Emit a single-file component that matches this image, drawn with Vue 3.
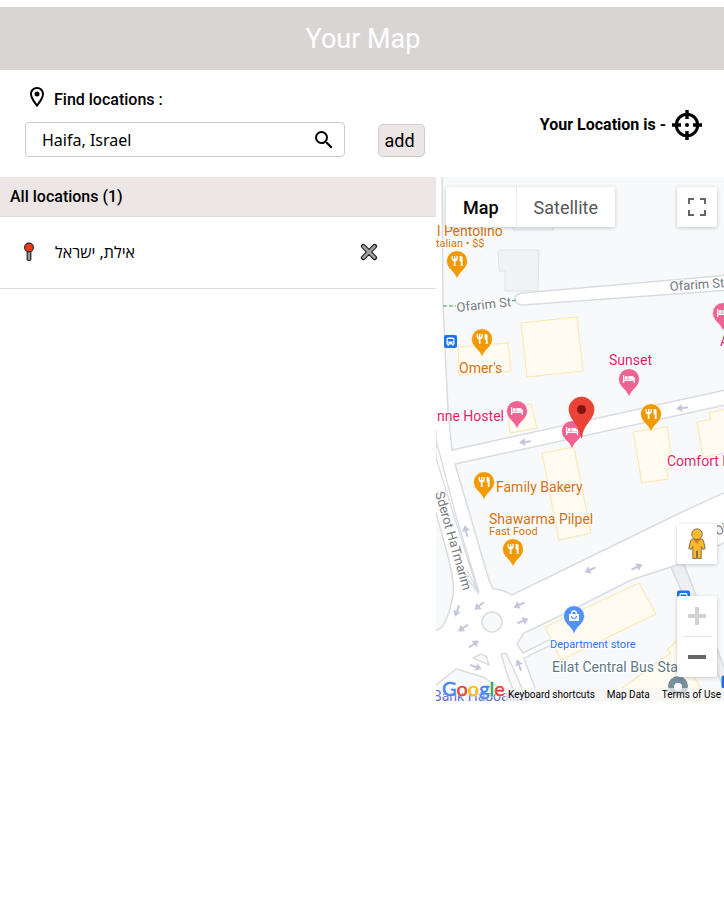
<script setup>
import { ref } from 'vue'

const query = ref('Haifa, Israel')
const locations = ref([{ id: 1, name: 'אילת, ישראל' }])

function add() {
  if (query.value) locations.value.push({ id: Date.now(), name: query.value })
}
function remove(id) {
  locations.value = locations.value.filter((l) => l.id !== id)
}

const pins = [
  { kind: 'food', x: 457, y: 261 },
  { kind: 'food', x: 482, y: 339 },
  { kind: 'food', x: 651, y: 414 },
  { kind: 'food', x: 484, y: 482 },
  { kind: 'food', x: 513, y: 549 },
  { kind: 'hotel', x: 517, y: 411 },
  { kind: 'hotel', x: 629, y: 379 },
  { kind: 'hotel', x: 572, y: 431 },
  { kind: 'hotel', x: 723, y: 313 },
  { kind: 'shop', x: 574, y: 616 },
]

const arrows = [
  { x: 525, y: 442, a: 172 },
  { x: 682, y: 408, a: 172 },
  { x: 466, y: 531, a: -103 },
  { x: 457, y: 611, a: 110 },
  { x: 479, y: 606, a: 140 },
  { x: 519, y: 605, a: 155 },
  { x: 463, y: 628, a: 145 },
  { x: 523, y: 621, a: -22 },
  { x: 474, y: 644, a: -35 },
  { x: 476, y: 667, a: 20 },
  { x: 519, y: 665, a: -110 },
  { x: 590, y: 570, a: 155 },
  { x: 637, y: 567, a: -25 },
]

const buildings = [
  '521,323 577,317 583,371 527,377',
  '458,347 508,343 511,371 459,375',
  '507,408 531,404 537,428 510,433',
  '542,453 574,447 591,533 559,540',
  '633,432 667,427 673,467 667,469 668,479 642,483',
  '697,422 711,419 709,413 726,409 726,453 703,457',
  '545,627 639,583 656,614 561,660',
  '690,628 667,650 671,653 622,688 630,701 708,701 694,677',
]

const labels = [
  { t: 'l Pentolino', x: 437, y: 236, c: 'food' },
  { t: 'talian • $$', x: 436, y: 247, c: 'food small' },
  { t: "Omer's", x: 459, y: 373, c: 'food' },
  { t: 'Family Bakery', x: 496, y: 492, c: 'food' },
  { t: 'Shawarma Pilpel', x: 489, y: 524, c: 'food' },
  { t: 'Fast Food', x: 489, y: 535, c: 'food small' },
  { t: 'nne Hostel', x: 437, y: 421, c: 'hotel' },
  { t: 'Sunset', x: 609, y: 365, c: 'hotel' },
  { t: 'Comfort Eilat', x: 667, y: 466, c: 'hotel' },
  { t: 'A', x: 720, y: 346, c: 'hotel' },
  { t: 'Department store', x: 550, y: 648, c: 'shop small' },
  { t: 'Eilat Central Bus Station', x: 552, y: 672, c: 'transit' },
  { t: 'Bank Hapoalim', x: 433, y: 701, c: 'bank' },
]
</script>

<template>
  <div class="page">
    <header class="title-bar"><h1>Your Map</h1></header>

    <section class="tools">
      <form class="finder" @submit.prevent="add">
        <label class="find-label" for="place">
          <svg width="24" height="24" viewBox="0 0 24 24"><path d="M12 2C8 2 5 5.100 5 9c0 5.200 7 13 7 13s7-7.800 7-13c0-3.900-3-7-7-7zM7 9c0-2.900 2.200-5 5-5s5 2.100 5 5c0 2.900-2.900 7.200-5 9.900C9.900 16.200 7 11.800 7 9z" /><circle cx="12" cy="9" r="2.500" /></svg>
          Find locations :
        </label>
        <div class="find-row">
          <div class="search">
            <input id="place" v-model="query" type="text" autocomplete="off" />
            <button class="search-btn" type="button" aria-label="Search">
              <svg width="24" height="24" viewBox="0 0 24 24"><path d="M15.500 14h-.79l-.28-.27A6.470 6.470 0 0 0 16 9.500 6.500 6.500 0 1 0 9.500 16c1.610 0 3.090-.59 4.230-1.570l.27.28v.79l5 4.990L20.490 19l-4.990-5zm-6 0C7.010 14 5 11.990 5 9.500S7.010 5 9.500 5 14 7.010 14 9.500 11.990 14 9.500 14z" /></svg>
            </button>
          </div>
          <button class="add" type="submit">add</button>
        </div>
      </form>
      <div class="mine">
        <span>Your Location is -</span>
        <button class="locate" type="button" aria-label="Find my location">
          <svg width="30" height="30" viewBox="0 0 30 30">
            <circle cx="15" cy="15" r="10.700" fill="none" stroke="#000" stroke-width="3" />
            <path d="M15 0v9M15 21v9M0 15h9M21 15h9" stroke="#000" stroke-width="3.400" />
            <circle cx="15" cy="15" r="2" />
          </svg>
        </button>
      </div>
    </section>

    <main class="content">
      <section class="list">
        <h2>All locations ({{ locations.length }})</h2>
        <ul>
          <li v-for="l in locations" :key="l.id">
            <svg class="tack" width="10" height="20" viewBox="0 0 10 20">
              <rect x="3.200" y="7" width="3.600" height="11.500" rx="1.200" fill="#999" stroke="#222" stroke-width="1.200" />
              <circle cx="5" cy="5.500" r="4.400" fill="#f03a17" stroke="#222" stroke-width="1.100" />
            </svg>
            <span class="name">{{ l.name }}</span>
            <button class="remove" type="button" aria-label="Remove" @click="remove(l.id)">
              <svg width="18" height="18" viewBox="0 0 18 18" stroke-linecap="square">
                <path d="M3.300 3.300l11.400 11.400M14.700 3.300L3.300 14.700" stroke="#222" stroke-width="4.800" stroke-linecap="round" />
                <path d="M3.500 3.500l11 11M14.500 3.500l-11 11" stroke="#a2a2a2" stroke-width="2.600" stroke-linecap="round" />
              </svg>
            </button>
          </li>
        </ul>
      </section>

      <section class="map">
        <svg class="canvas" viewBox="436 177 288 524" preserveAspectRatio="xMinYMin slice">
          <defs>
            <g id="food"><path d="M-6-4.500v3q0 2 2.200 2.200V5.500h1.700V.7Q.2.500.2-1.500v-3h-1.400v3h-1v-3h-1.400v3h-1v-3zM2-4.500Q5-5 5-3V5.500H3.200V1H2z" fill="#fff" transform="translate(.6 -.5)" /></g>
            <g id="hotel"><path d="M-6-4h1.300v4.500h9.400V-1.500h1.300V4H4.700V2h-9.400v2H-6z" fill="#fff" /><circle cx="-2.700" cy="-1.400" r="1.600" fill="#fff" /><path d="M-.5-3h3.700q1.500 0 1.500 1.500V.2H-.5z" fill="#fff" /></g>
            <g id="shop"><path d="M-5-2H5v7H-5z" fill="#fff" /><path d="M-2.500-2q0-3 2.500-3t2.500 3" fill="none" stroke="#fff" stroke-width="1.300" /><path d="M-2.500 0q0 2.500 2.500 2.500T2.500 0" fill="none" stroke="#5491f5" stroke-width="1.200" /></g>
            <path id="arrow" d="M-6-1H0v-3L6 0 0 4V1h-6z" fill="#c5c7dc" />
            <g id="bus"><rect x="-6.500" y="-6.500" width="13" height="13" rx="2" fill="#1a73e8" /><path d="M-4-2.500Q-4-4-2.500-4h5Q4-4 4-2.500V3H3v1.200H1.500V3h-3v1.200H-3V3h-1z" fill="#fff" /><path d="M-2.800-2.600h5.600v2.500h-5.600zM-2.800 1h1.300v1h-1.300zM1.500 1h1.300v1H1.500z" fill="#1a73e8" /></g>
          </defs>

          <rect x="436" y="177" width="600" height="700" fill="#fff" />
          <g class="land">
            <path d="M442 170L443 305 448 410 452 450 730 389V170z" />
            <path d="M455 464L730 404V490L682 512 512 595 504 591Q498 589 493 589L489 580z" />
            <path d="M430 500L436 513 449 560Q456 588 452 600 448 620 441 628L430 634z" />
            <path d="M430 690L436 685 456 669 483 677 498 687 512 705H430z" />
            <path d="M473 658L481 654 486 656 489 665z" />
            <path d="M501 654L506 653 514 670 529 705H519L508 677z" />
            <path d="M517 644L524 633 574 609 631 580 671 567 730 690V705H541L524 658 551 645 549 640 523 653z" />
            <path d="M683 562L730 540V690z" />
            <circle cx="492" cy="622" r="10" />
          </g>
          <path d="M524 656L550 642" class="lane" />
          <path d="M671 567L683 562 735 695H727z" fill="#eeeff2" stroke="#dadce0" stroke-width="1.500" />
          <path d="M436 430V458L454 516 478 592M436 440L456 516 479 592M461 570L479 594 467 570" fill="none" stroke="#dadce0" stroke-width="1.300" />

          <path d="M498 250h41l-1 41h-33v-20h-6zM513 215h40v15h-40z" fill="#f1f2f4" stroke="#e0e2e5" />
          <polygon v-for="b in buildings" :key="b" :points="b" class="building" />

          <path d="M730 275L522 293Q515 294 515 299T523 305L730 290" fill="#fff" stroke="#dadce0" stroke-width="1.600" />
          <path d="M443 306H456M512 301L516 300" stroke="#34a853" stroke-width="1.200" stroke-dasharray="4 2" />

          <use v-for="a in arrows" :key="`${a.x}-${a.y}`" href="#arrow" :transform="`translate(${a.x} ${a.y}) rotate(${a.a})`" />
          <use href="#bus" x="450.500" y="341.500" />
          <use href="#bus" x="683.500" y="597" />
          <use href="#bus" x="728" y="682" />
          <circle cx="678" cy="686" r="10" fill="#78909c" /><circle cx="678" cy="687" r="4" fill="#fff" />

          <g class="street">
            <text transform="translate(457 312) rotate(-6)">Ofarim St</text>
            <text transform="translate(670 291) rotate(-4)">Ofarim St</text>
            <text transform="translate(435 493) rotate(74)">Sderot HaTmarim</text>
            <text transform="translate(717 536) rotate(-25)">Oi</text>
          </g>
          <text v-for="l in labels" :key="l.t" :x="l.x" :y="l.y" class="label" :class="l.c">{{ l.t }}</text>

          <g v-for="p in pins" :key="`${p.x}-${p.y}`" :transform="`translate(${p.x} ${p.y})`">
            <path d="M0 18.500C-1.500 13-4 11.500-7.500 7.500A10.500 10.500 0 1 1 7.500 7.500C4 11.500 1.500 13 0 18.500z" class="pin" :class="p.kind" />
            <use :href="`#${p.kind}`" />
          </g>
          <path d="M581.500 438C580 426 574 423 570.500 415.500A12.500 12.500 0 1 1 592.500 415.500C589 423 583 426 581.500 438z" fill="#ea4335" stroke="#d23d30" stroke-width=".8" />
          <circle cx="581.500" cy="409.500" r="4.500" fill="#811411" />
        </svg>

        <div class="types">
          <button class="active" type="button">Map</button>
          <button type="button">Satellite</button>
        </div>
        <button class="ctl full" type="button" aria-label="Toggle fullscreen">
          <svg width="18" height="18" viewBox="0 0 18 18"><path d="M0 0h6v2H2v4H0zM12 0h6v6h-2V2h-4zM0 12h2v4h4v2H0zM16 12h2v6h-6v-2h4z" fill="#666" /></svg>
        </button>
        <div class="side">
          <button class="ctl" type="button" aria-label="Street View">
            <svg width="18" height="32" viewBox="0 0 18 32" stroke="#72664e" stroke-width=".9">
              <path d="M4.500 11h9q1.500 0 2 2l1.700 7.500-2.300 1-1.700-3V30.500h-3.700V23h-1v7.500H4.800v-12l-1.700 3-2.300-1L2.500 13q.5-2 2-2z" fill="#fbb829" />
              <path d="M5 11h8l-4 5z" fill="#e27d25" stroke="none" />
              <circle cx="9" cy="6.200" r="5.300" fill="#fbbc2c" />
            </svg>
          </button>
          <div class="zoom">
            <button type="button" aria-label="Zoom in"><svg width="18" height="18" viewBox="0 0 18 18"><path d="M7 0h4v7h7v4h-7v7H7v-7H0V7h7z" fill="#d1d1d1" /></svg></button>
            <button type="button" aria-label="Zoom out"><svg width="18" height="18" viewBox="0 0 18 18"><path d="M0 7h18v4H0z" fill="#666" /></svg></button>
          </div>
        </div>
        <a class="logo" href="#" aria-label="Google"><span class="b">G</span><span class="r">o</span><span class="y">o</span><span class="b">g</span><span class="g">l</span><span class="r">e</span></a>
        <div class="legal">
          <button type="button">Keyboard shortcuts</button>
          <button type="button">Map Data</button>
          <a href="#">Terms of Use</a>
        </div>
      </section>
    </main>
  </div>
</template>

<style>
body { background: #fff; }
</style>

<style scoped>
.page { padding-top: 7px; font-family: Roboto, sans-serif; color: #000; }
.page * { box-sizing: border-box; }
button { font-family: inherit; color: inherit; border: 0; padding: 0; background: none; cursor: pointer; }
svg { display: block; flex: none; }
h1, h2, ul { margin: 0; padding: 0; }
.title-bar { height: 63px; display: flex; align-items: center; justify-content: center; padding-left: 2px; background: #d9d5d4; color: #fff; }
h1 { font-size: 27px; font-weight: 400; line-height: 32px; }
.tools { display: flex; justify-content: space-between; height: 107px; padding: 15px 22px 20px 25px; }
.find-label { display: flex; gap: 5px; height: 24px; font-size: 16px; font-weight: 500; line-height: 29px; }
.find-row { display: flex; align-items: flex-end; gap: 33px; margin-top: 13px; }
.search { display: flex; align-items: center; width: 320px; height: 35px; border: 1px solid #ccc; border-radius: 4px; background: #fff; padding: 0 8px 0 16px; }
.search input { flex: 1; min-width: 0; border: 0; padding: 0; outline: 0; background: none; font: 16px/24px "Noto Sans", sans-serif; color: #000; }
.add { width: 47px; height: 33px; padding-right: 4px; border: 1px solid #ccc; border-radius: 5px; background: #ece6e6; font-size: 18px; }
.mine { display: flex; align-items: center; gap: 6px; font-size: 16px; font-weight: 700; padding-top: 7px; }
.content { display: grid; grid-template-columns: 109fr 72fr; }
h2 { height: 40px; padding: 0 10px; border-bottom: 1px solid #ddd; background: #ece6e6; font-size: 16px; font-weight: 500; line-height: 39px; }
li { display: flex; align-items: center; height: 72px; padding: 0 58px 2px 24px; border-bottom: 1px solid #ddd; list-style: none; }
.name { flex: 1; margin-left: 21px; font: 16px/24px "Noto Sans", "Open Sans", sans-serif; }
.map { position: relative; height: 524px; overflow: hidden; background: #f8f9fb; }
.canvas { width: 100%; height: 100%; }
.land { fill: #f8f9fb; stroke: #dadce0; stroke-width: 1.500px; }
.lane { stroke: #fff; stroke-width: 3px; }
.building { fill: #fffbf0; stroke: #fde8b6; stroke-width: 1.200px; }
.street text { font-size: 13px; fill: #757a80; stroke: #fff; stroke-width: 2px; paint-order: stroke; }
.label { font-size: 14px; stroke: #fff; stroke-width: 2px; paint-order: stroke; stroke-linejoin: round; }
.label.small { font-size: 11px; }
.label.food { fill: #d5700b; }
.label.hotel { fill: #de1f68; }
.label.shop { fill: #2674ea; }
.label.transit { fill: #5f7884; }
.label.bank { fill: #5f6fc4; }
.pin { stroke-width: 1px; stroke: #fff; stroke-opacity: 0.6; }
.pin.food { fill: #f29900; }
.pin.hotel { fill: #f06292; }
.pin.shop { fill: #5491f5; }
.types { position: absolute; top: 10px; left: 10px; display: flex; background: #fff; border-radius: 2px; box-shadow: 0 1px 4px rgba(0, 0, 0, 0.2); }
.types button { height: 40px; padding: 0 17px; font-size: 18px; color: #565656; }
.types button + button { border-left: 1px solid #eee; }
.types .active { color: #000; font-weight: 500; }
.ctl, .zoom { display: flex; align-items: center; justify-content: center; width: 40px; height: 40px; background: #fff; border-radius: 2px; box-shadow: 0 1px 4px rgba(0, 0, 0, 0.2); }
.full { position: absolute; top: 10px; right: 7px; }
.side { position: absolute; right: 7px; bottom: 24px; display: flex; flex-direction: column; gap: 32px; }
.zoom { flex-direction: column; justify-content: flex-start; height: 81px; }
.zoom button { display: flex; align-items: center; justify-content: center; width: 30px; height: 40px; }
.zoom button + button { border-top: 1px solid #e6e6e6; }
.logo { position: absolute; left: 6px; bottom: 0; font: 20px/26px Lato, sans-serif; text-decoration: none; -webkit-text-stroke: 0.500px; text-shadow: 0 0 2px #fff, 0 0 2px #fff; }
.b { color: #4285f4; }
.r { color: #ea4335; }
.y { color: #fbbc05; }
.g { color: #34a853; }
.legal { position: absolute; right: 0; bottom: 0; display: flex; gap: 12px; padding: 0 3px; background: rgba(245, 245, 245, 0.7); }
.legal button, .legal a { font-size: 10px; line-height: 13px; color: #000; text-decoration: none; white-space: nowrap; }
</style>
